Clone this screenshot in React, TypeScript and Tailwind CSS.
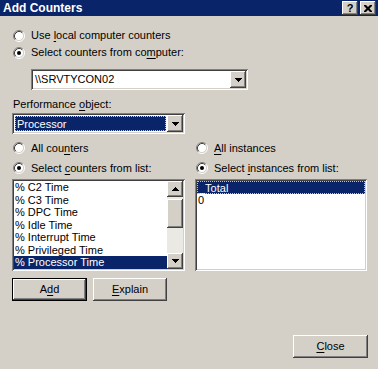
import React from "react"

const raised =
  "shadow-[inset_-1px_-1px_0_#404040,inset_1px_1px_0_#ffffff,inset_-2px_-2px_0_#808080,inset_2px_2px_0_#d4d0c8]"
const sunken =
  "shadow-[inset_1px_1px_0_#808080,inset_-1px_-1px_0_#ffffff,inset_2px_2px_0_#404040,inset_-2px_-2px_0_#d4d0c8]"

const Radio = ({ checked }: { checked?: boolean }) => (
  <svg width="12" height="12" viewBox="0 0 12 12" className="shrink-0">
    <circle cx="6" cy="6" r="4.5" fill="#ffffff" />
    <path d="M2.11 9.89 A5.5 5.5 0 0 1 9.89 2.11" fill="none" stroke="#808080" />
    <path d="M9.89 2.11 A5.5 5.5 0 0 1 2.11 9.89" fill="none" stroke="#ffffff" />
    <path d="M2.82 9.18 A4.5 4.5 0 0 1 9.18 2.82" fill="none" stroke="#404040" />
    <path d="M9.18 2.82 A4.5 4.5 0 0 1 2.82 9.18" fill="none" stroke="#d4d0c8" />
    {checked && <circle cx="6" cy="6" r="2" fill="#000000" />}
  </svg>
)

const RadioRow = ({ checked, children, h }: { checked?: boolean; children: React.ReactNode; h: string }) => (
  <div className={`flex items-center gap-[6px] pl-[1px] ${h}`}>
    <Radio checked={checked} />
    <span className="leading-[13px] whitespace-nowrap">{children}</span>
  </div>
)

const DownArrow = () => (
  <svg width="7" height="4" viewBox="0 0 7 4">
    <path d="M0 0h7v1h-1v1h-1v1h-1v1h-1v-1h-1v-1h-1v-1h-1z" fill="#000000" />
  </svg>
)

const UpArrow = () => (
  <svg width="7" height="4" viewBox="0 0 7 4">
    <path d="M3 0h1v1h1v1h1v1h1v1h-7v-1h1v-1h1v-1h1z" fill="#000000" />
  </svg>
)

const DropButton = () => (
  <div className={`w-[16px] h-full bg-[#d4d0c8] flex items-center justify-center shrink-0 ${raised}`}>
    <DownArrow />
  </div>
)

const Button = ({ children, def, w }: { children: React.ReactNode; def?: boolean; w: string }) => (
  <div className={`h-[23px] ${w} ${def ? "border border-black" : ""}`}>
    <div className={`h-full w-full bg-[#d4d0c8] flex items-center justify-center ${raised}`}>{children}</div>
  </div>
)

const U = ({ children }: { children: React.ReactNode }) => <span className="underline underline-offset-[2px]">{children}</span>

export default function App() {
  const counters = [
    "% C2 Time",
    "% C3 Time",
    "% DPC Time",
    "% Idle Time",
    "% Interrupt Time",
    "% Privileged Time",
    "% Processor Time",
  ]

  return (
    <div className="w-[378px] h-[369px] bg-[#d4d0c8] overflow-hidden text-[11px] text-black font-['Liberation_Sans',Arial,sans-serif] select-none">
      {/* Title bar */}
      <div className="h-[16px] bg-[#0a246a] flex items-center justify-between pl-[3px] pr-[2px]">
        <span className="text-white font-bold text-[12px] leading-[16px]">Add Counters</span>
        <div className="flex gap-[2px]">
          <div className={`w-[16px] h-[14px] bg-[#d4d0c8] flex items-center justify-center ${raised}`}>
            <span className="font-bold text-[11px] leading-none">?</span>
          </div>
          <div className={`w-[16px] h-[14px] bg-[#d4d0c8] flex items-center justify-center ${raised}`}>
            <svg width="8" height="7" viewBox="0 0 8 7">
              <path d="M0 0h2l2 2 2-2h2v1l-2.5 2.5 2.5 2.5v1h-2l-2-2-2 2h-2v-1l2.5-2.5-2.5-2.5z" fill="#000000" />
            </svg>
          </div>
        </div>
      </div>

      <div className="pl-[12px] pt-[11px]">
        <RadioRow h="h-[17px]">
          Use <U>l</U>ocal computer counters
        </RadioRow>
        <RadioRow h="h-[17px]" checked>
          Select counters from co<U>m</U>puter:
        </RadioRow>

        <div className={`ml-[19px] mt-[8px] w-[217px] h-[21px] bg-white flex p-[2px] ${sunken}`}>
          <div className="flex-1 pl-[2px] leading-[17px]">\\SRVTYCON02</div>
          <DropButton />
        </div>

        <div className="mt-[8px] h-[13px] leading-[13px] pl-[1px]">
          Performance <U>o</U>bject:
        </div>

        <div className={`mt-[2px] w-[173px] h-[21px] bg-white flex p-[2px] ${sunken}`}>
          <div className="flex-1 p-[1px]">
            <div className="h-full bg-[#0a246a] text-white leading-[15px] pl-[1px] border border-dotted border-[#c8c8a0]">
              Processor
            </div>
          </div>
          <DropButton />
        </div>

        <div className="mt-[4px] flex gap-[10px]">
          {/* Counters column */}
          <div className="w-[173px]">
            <RadioRow h="h-[20px]">
              All cou<U>n</U>ters
            </RadioRow>
            <RadioRow h="h-[20px]" checked>
              Select <U>c</U>ounters from list:
            </RadioRow>
            <div className={`mt-[1px] h-[92px] bg-white p-[2px] flex ${sunken}`}>
              <div className="flex-1 overflow-hidden">
                {counters.map((c, i) => (
                  <div
                    key={c}
                    className={`h-[12.5px] leading-[12.5px] pl-[1px] whitespace-nowrap ${
                      i === counters.length - 1 ? "bg-[#0a246a] text-white" : ""
                    }`}
                  >
                    {c}
                  </div>
                ))}
              </div>
              <div className="w-[16px] flex flex-col bg-[#ebe9e4]">
                <div className={`h-[16px] bg-[#d4d0c8] flex items-center justify-center ${raised}`}>
                  <UpArrow />
                </div>
                <div className={`mt-[2px] h-[29px] bg-[#d4d0c8] ${raised}`} />
                <div className="flex-1" />
                <div className={`h-[16px] bg-[#d4d0c8] flex items-center justify-center ${raised}`}>
                  <DownArrow />
                </div>
              </div>
            </div>
          </div>

          {/* Instances column */}
          <div className="w-[172px]">
            <RadioRow h="h-[20px]">
              <U>A</U>ll instances
            </RadioRow>
            <RadioRow h="h-[20px]" checked>
              Select <U>i</U>nstances from list:
            </RadioRow>
            <div className={`mt-[1px] h-[92px] bg-white p-[2px] ${sunken}`}>
              <div className="h-[13px] leading-[12px] pl-[1px] bg-[#0a246a] text-white border border-dotted border-[#c8c8a0]">
                _Total
              </div>
              <div className="h-[13px] leading-[13px] pl-[1px]">0</div>
            </div>
          </div>
        </div>

        <div className="mt-[7px] flex gap-[6px]">
          <Button def w="w-[75px]">
            A<U>d</U>d
          </Button>
          <Button w="w-[74px]">
            <U>E</U>xplain
          </Button>
        </div>

        <div className="mt-[34px] flex justify-end pr-[10px]">
          <Button w="w-[75px]">
            <U>C</U>lose
          </Button>
        </div>
      </div>
    </div>
  )
}
